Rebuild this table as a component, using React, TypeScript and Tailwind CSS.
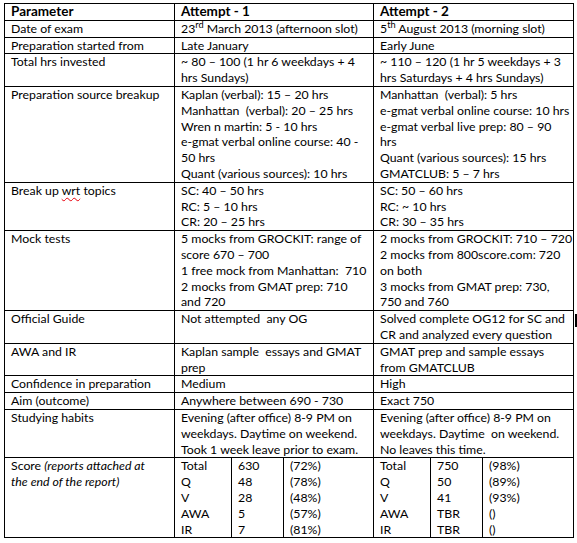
import type { ReactNode } from 'react';

type Row = {
  label: ReactNode;
  first: ReactNode[];
  second: ReactNode[];
};

const rows: Row[] = [
  {
    label: 'Date of exam',
    first: [
      <>
        23<sup>rd</sup> March 2013 (afternoon slot)
      </>,
    ],
    second: [
      <>
        5<sup>th</sup> August 2013 (morning slot)
      </>,
    ],
  },
  { label: 'Preparation started from', first: ['Late January'], second: ['Early June'] },
  {
    label: 'Total hrs invested',
    first: ['~ 80 – 100 (1 hr 6 weekdays + 4', 'hrs Sundays)'],
    second: ['~ 110 – 120 (1 hr 5 weekdays + 3', 'hrs Saturdays + 4 hrs Sundays)'],
  },
  {
    label: 'Preparation source breakup',
    first: [
      'Kaplan (verbal): 15 – 20 hrs',
      'Manhattan  (verbal): 20 – 25 hrs',
      'Wren n martin: 5 - 10 hrs',
      'e-gmat verbal online course: 40 -',
      '50 hrs',
      'Quant (various sources): 10 hrs',
    ],
    second: [
      'Manhattan  (verbal): 5 hrs',
      'e-gmat verbal online course: 10 hrs',
      'e-gmat verbal live prep: 80 – 90',
      'hrs',
      'Quant (various sources): 15 hrs',
      'GMATCLUB: 5 – 7 hrs',
    ],
  },
  {
    label: (
      <>
        Break up{' '}
        <span className="underline decoration-wavy decoration-red-600 decoration-1 underline-offset-2">wrt</span>{' '}
        topics
      </>
    ),
    first: ['SC: 40 – 50 hrs', 'RC: 5 – 10 hrs', 'CR: 20 – 25 hrs'],
    second: ['SC: 50 – 60 hrs', 'RC: ~ 10 hrs', 'CR: 30 – 35 hrs'],
  },
  {
    label: 'Mock tests',
    first: [
      '5 mocks from GROCKIT: range of',
      'score 670 – 700',
      '1 free mock from Manhattan:  710',
      '2 mocks from GMAT prep: 710',
      'and 720',
    ],
    second: [
      '2 mocks from GROCKIT: 710 – 720',
      '2 mocks from 800score.com: 720',
      'on both',
      '3 mocks from GMAT prep: 730,',
      '750 and 760',
    ],
  },
  {
    label: 'Official Guide',
    first: ['Not attempted  any OG'],
    second: ['Solved complete OG12 for SC and', 'CR and analyzed every question'],
  },
  {
    label: 'AWA and IR',
    first: ['Kaplan sample  essays and GMAT', 'prep'],
    second: ['GMAT prep and sample essays', 'from GMATCLUB'],
  },
  { label: 'Confidence in preparation', first: ['Medium'], second: ['High'] },
  { label: 'Aim (outcome)', first: ['Anywhere between 690 - 730'], second: ['Exact 750'] },
  {
    label: 'Studying habits',
    first: [
      'Evening (after office) 8-9 PM on',
      'weekdays. Daytime on weekend.',
      'Took 1 week leave prior to exam.',
    ],
    second: ['Evening (after office) 8-9 PM on', 'weekdays. Daytime  on weekend.', 'No leaves this time.'],
  },
];

const scores = {
  first: [
    ['Total', '630', '(72%)'],
    ['Q', '48', '(78%)'],
    ['V', '28', '(48%)'],
    ['AWA', '5', '(57%)'],
    ['IR', '7', '(81%)'],
  ],
  second: [
    ['Total', '750', '(98%)'],
    ['Q', '50', '(89%)'],
    ['V', '41', '(93%)'],
    ['AWA', 'TBR', '()'],
    ['IR', 'TBR', '()'],
  ],
};

const cell = 'border border-black px-[6px] align-top text-left font-normal';
const head = 'border border-black px-[6px] align-top text-left text-[13.5px] font-bold';

function Lines({ items }: { items: ReactNode[] }) {
  return (
    <>
      {items.map((line, i) => (
        <div key={i} className="whitespace-pre">
          {line}
        </div>
      ))}
    </>
  );
}

function ScoreGrid({ data }: { data: string[][] }) {
  return (
    <div className="grid grid-cols-[57px_52px_1fr]">
      {[0, 1, 2].map((col) => (
        <div key={col} className={col < 2 ? 'border-r border-black px-[6px]' : 'px-[6px]'}>
          {data.map((r) => (
            <div key={r[0]}>{r[col]}</div>
          ))}
        </div>
      ))}
    </div>
  );
}

export default function App() {
  return (
    <div className="relative h-[543px] w-[577px] overflow-hidden bg-white pl-[4px] pt-[3px] font-['Lato',sans-serif] text-[12.3px] leading-[15.8px] text-black">
      <table className="w-[569px] table-fixed border-collapse">
        <colgroup>
          <col className="w-[170px]" />
          <col className="w-[199px]" />
          <col className="w-[200px]" />
        </colgroup>
        <thead>
          <tr>
            <th className={head}>Parameter</th>
            <th className={head}>Attempt - 1</th>
            <th className={head}>Attempt - 2</th>
          </tr>
        </thead>
        <tbody>
          {rows.map((row, i) => (
            <tr key={i}>
              <td className={cell}>{row.label}</td>
              <td className={cell}>
                <Lines items={row.first} />
              </td>
              <td className={cell}>
                <Lines items={row.second} />
              </td>
            </tr>
          ))}
          <tr>
            <td className={cell}>
              Score <i>(reports attached at</i>
              <br />
              <i>the end of the report)</i>
            </td>
            <td className="border border-black p-0 align-top">
              <ScoreGrid data={scores.first} />
            </td>
            <td className="border border-black p-0 align-top">
              <ScoreGrid data={scores.second} />
            </td>
          </tr>
        </tbody>
      </table>
      {/* text cursor left in the screenshot */}
      <div className="absolute left-[575px] top-[314px] h-[13px] w-[2px] bg-black" />
    </div>
  );
}
